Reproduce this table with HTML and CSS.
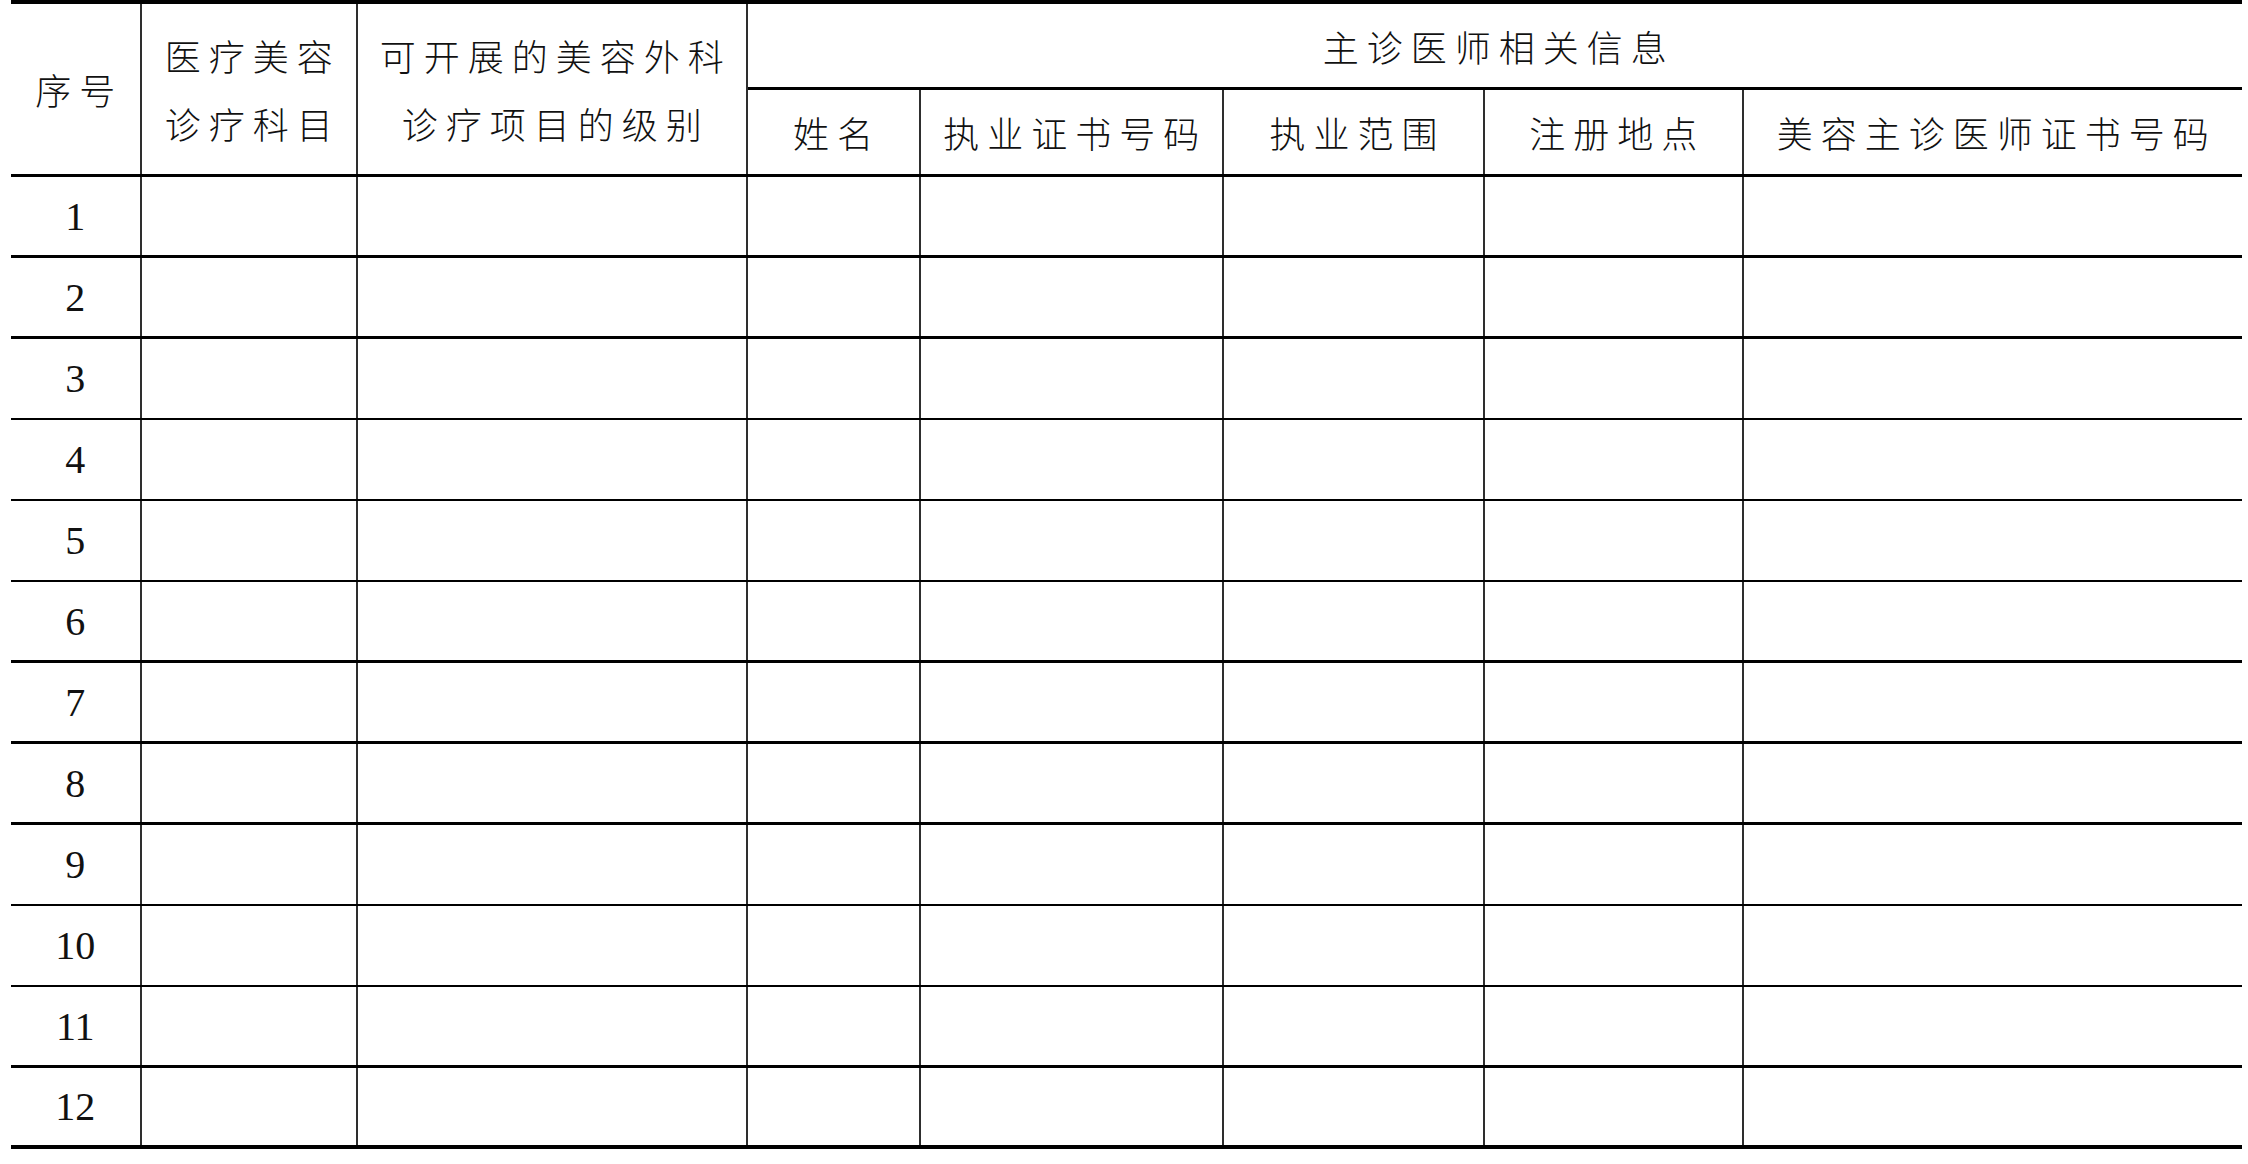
FILE: index.html
```html
<!DOCTYPE html>
<html lang="zh-CN">
<head>
<meta charset="utf-8">
<title>主诊医师相关信息表</title>
<link rel="stylesheet" href="styles.css">
</head>
<body>
<div class="sheet">
  <div class="head">
    <div class="cell hc tall">序号</div>
    <div class="cell hc tall two">医疗美容<br>诊疗科目</div>
    <div class="cell hc tall two">可开展的美容外科<br>诊疗项目的级别</div>
    <div class="cell hc group last">主诊医师相关信息</div>
    <div class="cell hc">姓名</div>
    <div class="cell hc">执业证书号码</div>
    <div class="cell hc">执业范围</div>
    <div class="cell hc">注册地点</div>
    <div class="cell hc last">美容主诊医师证书号码</div>
  </div>
  <div class="row thick"><div class="cell num">1</div><div class="cell"></div><div class="cell"></div><div class="cell"></div><div class="cell"></div><div class="cell"></div><div class="cell"></div><div class="cell last"></div></div>
  <div class="row thick"><div class="cell num">2</div><div class="cell"></div><div class="cell"></div><div class="cell"></div><div class="cell"></div><div class="cell"></div><div class="cell"></div><div class="cell last"></div></div>
  <div class="row thin"><div class="cell num">3</div><div class="cell"></div><div class="cell"></div><div class="cell"></div><div class="cell"></div><div class="cell"></div><div class="cell"></div><div class="cell last"></div></div>
  <div class="row thin"><div class="cell num">4</div><div class="cell"></div><div class="cell"></div><div class="cell"></div><div class="cell"></div><div class="cell"></div><div class="cell"></div><div class="cell last"></div></div>
  <div class="row thin"><div class="cell num">5</div><div class="cell"></div><div class="cell"></div><div class="cell"></div><div class="cell"></div><div class="cell"></div><div class="cell"></div><div class="cell last"></div></div>
  <div class="row thick"><div class="cell num">6</div><div class="cell"></div><div class="cell"></div><div class="cell"></div><div class="cell"></div><div class="cell"></div><div class="cell"></div><div class="cell last"></div></div>
  <div class="row thick"><div class="cell num">7</div><div class="cell"></div><div class="cell"></div><div class="cell"></div><div class="cell"></div><div class="cell"></div><div class="cell"></div><div class="cell last"></div></div>
  <div class="row thick"><div class="cell num">8</div><div class="cell"></div><div class="cell"></div><div class="cell"></div><div class="cell"></div><div class="cell"></div><div class="cell"></div><div class="cell last"></div></div>
  <div class="row thin"><div class="cell num">9</div><div class="cell"></div><div class="cell"></div><div class="cell"></div><div class="cell"></div><div class="cell"></div><div class="cell"></div><div class="cell last"></div></div>
  <div class="row thin"><div class="cell num">10</div><div class="cell"></div><div class="cell"></div><div class="cell"></div><div class="cell"></div><div class="cell"></div><div class="cell"></div><div class="cell last"></div></div>
  <div class="row thick"><div class="cell num">11</div><div class="cell"></div><div class="cell"></div><div class="cell"></div><div class="cell"></div><div class="cell"></div><div class="cell"></div><div class="cell last"></div></div>
  <div class="row end"><div class="cell num">12</div><div class="cell"></div><div class="cell"></div><div class="cell"></div><div class="cell"></div><div class="cell"></div><div class="cell"></div><div class="cell last"></div></div>
</div>
</body>
</html>
```
FILE: styles.css
```css
html, body {
  margin: 0;
  padding: 0;
  background: #ffffff;
}

body {
  width: 2248px;
  height: 1164px;
  overflow: hidden;
  color: #111;
  font-family: "Noto Sans CJK SC", "Noto Sans", sans-serif;
}

.sheet {
  margin-left: 11px;
  width: 2231px;
}

.head,
.row {
  display: grid;
  grid-template-columns: 130.5px 216.5px 389.5px 173px 303.5px 261px 258.5px 498.5px;
  box-sizing: border-box;
}

.head {
  grid-template-rows: 86px 84px;
  border-top: 4px solid #000;
  border-bottom: 3px solid #000;
  height: 177px;
}

.row {
  height: 81px;
}

.row.thick { border-bottom: 3px solid #000; }
.row.thin { border-bottom: 2px solid #000; }
.row.end { border-bottom: 4px solid #000; }

.cell {
  box-sizing: border-box;
  border-right: 2px solid #2e2e2e;
  display: flex;
  align-items: center;
  justify-content: center;
  text-align: center;
}

.cell.last {
  border-right: none;
}

.hc {
  font-size: 36px;
  font-weight: 300;
  letter-spacing: 8px;
  padding-left: 8px;
  line-height: 68px;
  white-space: nowrap;
}

.tall {
  grid-row: span 2;
}

.group {
  grid-column: span 5;
  border-bottom: 3px solid #000;
}

.num {
  font-family: "Liberation Serif", "DejaVu Serif", serif;
  font-size: 40px;
  font-weight: 400;
}
```
